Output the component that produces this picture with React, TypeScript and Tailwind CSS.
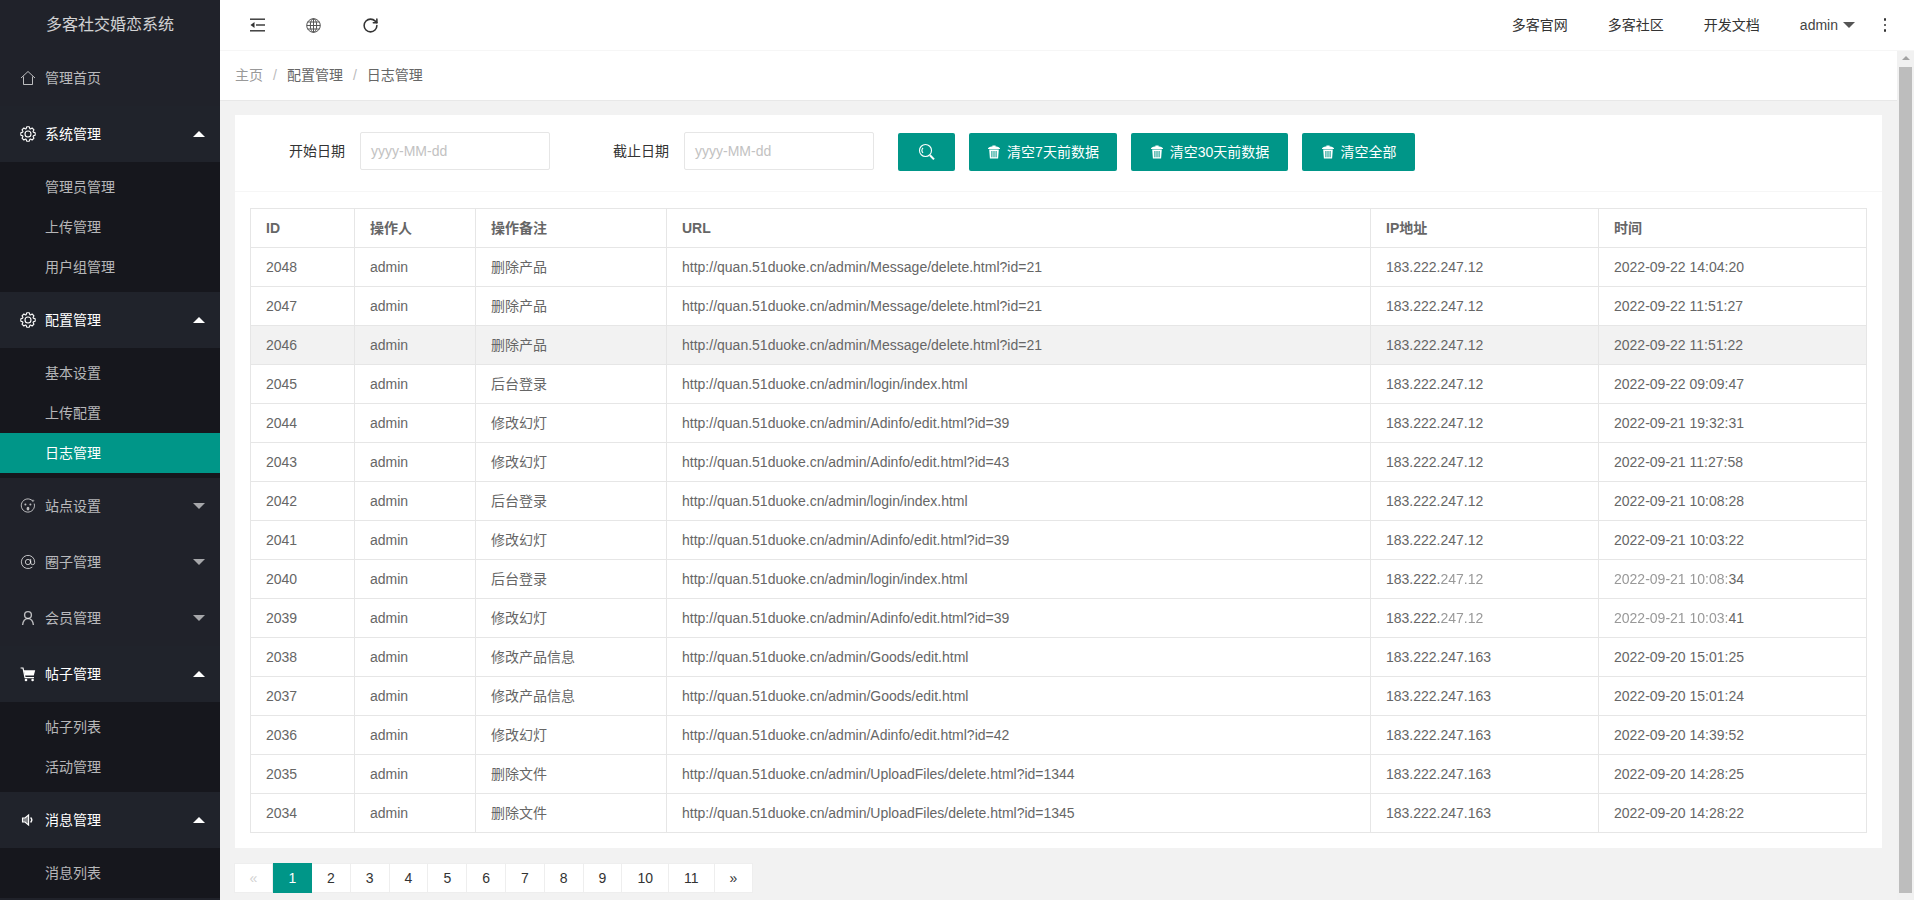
import React from 'react';
import { AtSign, RotateCw } from 'lucide-react';

const FONT = { fontFamily: '"Liberation Sans", "Noto Sans CJK SC", sans-serif' };

// 8 tooth outline for the settings icon
const GEAR_POINTS = Array.from({ length: 8 })
  .flatMap((_, i) => {
    const a = (i * Math.PI) / 4;
    return [
      [5.6, a - 0.34],
      [7.3, a - 0.18],
      [7.3, a + 0.18],
      [5.6, a + 0.34],
    ];
  })
  .map(([r, a]) => `${(8 + r * Math.cos(a)).toFixed(2)},${(8 + r * Math.sin(a)).toFixed(2)}`)
  .join(' ');

const IconHome = () => (
  <svg width="16" height="16" viewBox="0 0 16 16" fill="none" stroke="currentColor" strokeWidth="1">
    <path d="M1 8 L8 1.5 L15 8" />
    <path d="M3.5 6.5 V14.5 H12.5 V6.5" />
  </svg>
);

const IconGear = () => (
  <svg width="16" height="16" viewBox="0 0 16 16" fill="none" stroke="currentColor" strokeWidth="1.1" strokeLinejoin="round">
    <polygon points={GEAR_POINTS} />
    <circle cx="8" cy="8" r="3" />
  </svg>
);

const IconFace = () => (
  <svg width="16" height="16" viewBox="0 0 16 16" fill="none" stroke="currentColor" strokeWidth="1">
    <path d="M12.6 2.9 A6.6 6.6 0 1 0 14.2 5.6" />
    <path d="M13 1 l.4 1.4 1.4.4-1.4.4-.4 1.4-.4-1.4-1.4-.4 1.4-.4 z" fill="currentColor" stroke="none" />
    <circle cx="5.4" cy="6.6" r="1" fill="currentColor" stroke="none" />
    <circle cx="10.4" cy="6.6" r="1" fill="currentColor" stroke="none" />
    <ellipse cx="8" cy="10.6" rx="1.4" ry="1.9" fill="currentColor" stroke="none" />
  </svg>
);

const IconUser = () => (
  <svg width="16" height="16" viewBox="0 0 16 16" fill="none" stroke="currentColor" strokeWidth="1.4">
    <circle cx="8" cy="5" r="3.4" />
    <path d="M2.6 15 C3 11 5 8.6 8 8.6 S13 11 13.4 15" />
  </svg>
);

const IconCart = () => (
  <svg width="16" height="16" viewBox="0 0 16 16" fill="none" stroke="currentColor" strokeWidth="1.2">
    <path d="M0.6 2 H3 L5 11.6 H14" />
    <path d="M3.8 4.2 H15.2 L13.8 9.4 H4.8 z" fill="currentColor" stroke="none" />
    <circle cx="6" cy="14" r="1.3" fill="currentColor" stroke="none" />
    <circle cx="12.6" cy="14" r="1.3" fill="currentColor" stroke="none" />
  </svg>
);

const IconSpeaker = () => (
  <svg width="16" height="16" viewBox="0 0 16 16" fill="none" stroke="currentColor" strokeWidth="1.1">
    <path d="M2.5 6 H5 L8.6 3 V13 L5 10 H2.5 z" fill="currentColor" fillOpacity="0.45" />
    <path d="M10.6 5.6 A3.4 3.4 0 0 1 10.6 10.4" strokeWidth="1.4" />
  </svg>
);

const IconShrink = () => (
  <svg width="16" height="14" viewBox="0 0 16 14" fill="#333">
    <rect x="0" y="0.5" width="15" height="1.4" />
    <rect x="6" y="6.3" width="9" height="1.4" />
    <rect x="0" y="12.1" width="15" height="1.4" />
    <path d="M4.5 4 V10 L0.5 7 z" />
  </svg>
);

const IconGlobe = () => (
  <svg width="15" height="15" viewBox="0 0 15 15" fill="none" stroke="#555" strokeWidth="1">
    <circle cx="7.5" cy="7.5" r="6.8" />
    <ellipse cx="7.5" cy="7.5" rx="3.2" ry="6.8" />
    <path d="M7.5 .7 V14.3 M.7 7.5 H14.3 M1.6 4 H13.4 M1.6 11 H13.4" />
  </svg>
);

const IconSearch = () => (
  <svg width="18" height="18" viewBox="0 0 18 18" fill="none" stroke="#fff" strokeWidth="1.1">
    <circle cx="7.5" cy="7.5" r="6" />
    <path d="M5 4.8 A4 4 0 0 0 5 10" />
    <path d="M12 12.2 L16 16.4" strokeWidth="2" />
  </svg>
);

const IconTrash = () => (
  <svg width="14" height="14" viewBox="0 0 14 14" fill="#fff">
    <path d="M1 3.2 C2.5 1.6 4.6 1.6 5.4 1.6 V0.6 H8.6 V1.6 C9.4 1.6 11.5 1.6 13 3.2 V3.9 H1 z" />
    <path d="M2.2 4.6 H11.8 L11.1 13.6 H2.9 z M4.4 6 V12.2 H5.4 V6 z M6.5 6 V12.2 H7.5 V6 z M8.6 6 V12.2 H9.6 V6 z" fillRule="evenodd" />
  </svg>
);

const Caret = ({ up }: { up?: boolean }) => {
  if (up) {
    return <span className="absolute right-[15px] top-1/2 -mt-[3px] h-0 w-0 border-x-[6px] border-b-[6px] border-x-transparent border-b-white" />;
  }
  return <span className="absolute right-[15px] top-1/2 -mt-[3px] h-0 w-0 border-x-[6px] border-t-[6px] border-x-transparent border-t-[#a6a7aa]" />;
};

interface MenuGroup {
  label: string;
  icon: React.ReactNode;
  open?: boolean;
  hasCaret?: boolean;
  children?: { label: string; active?: boolean }[];
}

const MENU: MenuGroup[] = [
  { label: '管理首页', icon: <IconHome /> },
  {
    label: '系统管理',
    icon: <IconGear />,
    open: true,
    hasCaret: true,
    children: [{ label: '管理员管理' }, { label: '上传管理' }, { label: '用户组管理' }],
  },
  {
    label: '配置管理',
    icon: <IconGear />,
    open: true,
    hasCaret: true,
    children: [{ label: '基本设置' }, { label: '上传配置' }, { label: '日志管理', active: true }],
  },
  { label: '站点设置', icon: <IconFace />, hasCaret: true },
  { label: '圈子管理', icon: <AtSign size={16} strokeWidth={1.5} />, hasCaret: true },
  { label: '会员管理', icon: <IconUser />, hasCaret: true },
  {
    label: '帖子管理',
    icon: <IconCart />,
    open: true,
    hasCaret: true,
    children: [{ label: '帖子列表' }, { label: '活动管理' }],
  },
  {
    label: '消息管理',
    icon: <IconSpeaker />,
    open: true,
    hasCaret: true,
    children: [{ label: '消息列表' }],
  },
];

const ROWS = [
  ['2048', 'admin', '删除产品', 'http://quan.51duoke.cn/admin/Message/delete.html?id=21', '183.222.247.12', '2022-09-22 14:04:20'],
  ['2047', 'admin', '删除产品', 'http://quan.51duoke.cn/admin/Message/delete.html?id=21', '183.222.247.12', '2022-09-22 11:51:27'],
  ['2046', 'admin', '删除产品', 'http://quan.51duoke.cn/admin/Message/delete.html?id=21', '183.222.247.12', '2022-09-22 11:51:22'],
  ['2045', 'admin', '后台登录', 'http://quan.51duoke.cn/admin/login/index.html', '183.222.247.12', '2022-09-22 09:09:47'],
  ['2044', 'admin', '修改幻灯', 'http://quan.51duoke.cn/admin/Adinfo/edit.html?id=39', '183.222.247.12', '2022-09-21 19:32:31'],
  ['2043', 'admin', '修改幻灯', 'http://quan.51duoke.cn/admin/Adinfo/edit.html?id=43', '183.222.247.12', '2022-09-21 11:27:58'],
  ['2042', 'admin', '后台登录', 'http://quan.51duoke.cn/admin/login/index.html', '183.222.247.12', '2022-09-21 10:08:28'],
  ['2041', 'admin', '修改幻灯', 'http://quan.51duoke.cn/admin/Adinfo/edit.html?id=39', '183.222.247.12', '2022-09-21 10:03:22'],
  ['2040', 'admin', '后台登录', 'http://quan.51duoke.cn/admin/login/index.html', '183.222.247.12', '2022-09-21 10:08:34'],
  ['2039', 'admin', '修改幻灯', 'http://quan.51duoke.cn/admin/Adinfo/edit.html?id=39', '183.222.247.12', '2022-09-21 10:03:41'],
  ['2038', 'admin', '修改产品信息', 'http://quan.51duoke.cn/admin/Goods/edit.html', '183.222.247.163', '2022-09-20 15:01:25'],
  ['2037', 'admin', '修改产品信息', 'http://quan.51duoke.cn/admin/Goods/edit.html', '183.222.247.163', '2022-09-20 15:01:24'],
  ['2036', 'admin', '修改幻灯', 'http://quan.51duoke.cn/admin/Adinfo/edit.html?id=42', '183.222.247.163', '2022-09-20 14:39:52'],
  ['2035', 'admin', '删除文件', 'http://quan.51duoke.cn/admin/UploadFiles/delete.html?id=1344', '183.222.247.163', '2022-09-20 14:28:25'],
  ['2034', 'admin', '删除文件', 'http://quan.51duoke.cn/admin/UploadFiles/delete.html?id=1345', '183.222.247.163', '2022-09-20 14:28:22'],
];

const HEADERS = ['ID', '操作人', '操作备注', 'URL', 'IP地址', '时间'];
const PAGES = ['2', '3', '4', '5', '6', '7', '8', '9', '10', '11', '»'];

const Sidebar = () => (
  <aside className="flex h-full w-[220px] shrink-0 flex-col overflow-hidden bg-[#20222a]">
    <div className="flex h-[50px] shrink-0 items-center justify-center text-base text-white/80">多客社交婚恋系统</div>
    {MENU.map((group) => (
      <div key={group.label} className="shrink-0">
        <div
          className={`relative flex h-[56px] items-center pl-[20px] text-sm ${
            group.open ? 'bg-[#20232b] text-white' : 'text-white/70'
          }`}
        >
          <span className="flex w-[25px] items-center">{group.icon}</span>
          <span>{group.label}</span>
          {group.hasCaret && <Caret up={group.open} />}
        </div>
        {group.children && (
          <div className="bg-[#16171d] py-[5px]">
            {group.children.map((child) => (
              <div
                key={child.label}
                className={`flex h-[40px] items-center pl-[45px] text-sm ${
                  child.active ? 'bg-[#009688] text-white' : 'text-white/70'
                }`}
              >
                {child.label}
              </div>
            ))}
          </div>
        )}
      </div>
    ))}
  </aside>
);

const TopBar = () => (
  <header className="flex h-[51px] shrink-0 items-center border-b border-[#f6f6f6] bg-white pl-[30px] pr-[25px] text-sm text-[#333]">
    <IconShrink />
    <span className="ml-[40px]">
      <IconGlobe />
    </span>
    <span className="ml-[41px]">
      <RotateCw size={17} strokeWidth={2.2} color="#333" />
    </span>
    <div className="ml-auto flex items-center">
      <span>多客官网</span>
      <span className="ml-[40px]">多客社区</span>
      <span className="ml-[40px]">开发文档</span>
      <span className="ml-[40px] text-[#444]">admin</span>
      <span className="ml-[5px] h-0 w-0 border-x-[6px] border-t-[6px] border-x-transparent border-t-[#555]" />
      <span className="ml-[26px] flex w-[8px] flex-col items-center gap-[3px]">
        <span className="h-[2.5px] w-[2.5px] rounded-full bg-[#333]" />
        <span className="h-[2.5px] w-[2.5px] rounded-full bg-[#333]" />
        <span className="h-[2.5px] w-[2.5px] rounded-full bg-[#333]" />
      </span>
    </div>
  </header>
);

const ActionButton = ({ label, className }: { label: string; className: string }) => (
  <button className={`flex h-[38px] items-center justify-center gap-[6px] rounded-[2px] bg-[#009688] text-sm text-white ${className}`}>
    <IconTrash />
    {label}
  </button>
);

const DateField = ({ label, inputWidth, labelWidth }: { label: string; inputWidth: string; labelWidth: string }) => (
  <div className="flex items-center">
    <label className={`pr-[15px] text-right text-sm text-[#333] ${labelWidth}`}>{label}</label>
    <div className={`flex h-[38px] items-center rounded-[2px] border border-[#e6e6e6] pl-[10px] text-sm text-[#c2c2c2] ${inputWidth}`}>yyyy-MM-dd</div>
  </div>
);

const FilterBar = () => (
  <div className="flex h-[77px] items-start border-b border-[#f6f6f6] pt-[17px]">
    <DateField label="开始日期" labelWidth="w-[125px]" inputWidth="w-[190px]" />
    <DateField label="截止日期" labelWidth="w-[134px]" inputWidth="w-[190px]" />
    <div className="ml-[24px] mt-px flex gap-[14px]">
      <button className="flex h-[38px] w-[57px] items-center justify-center rounded-[2px] bg-[#009688] text-white">
        <IconSearch />
      </button>
      <ActionButton label="清空7天前数据" className="w-[148px]" />
      <ActionButton label="清空30天前数据" className="w-[157px]" />
      <ActionButton label="清空全部" className="w-[113px]" />
    </div>
  </div>
);

const IpCell = ({ value, blurred }: { value: string; blurred: boolean }) =>
  blurred ? (
    <>
      183.222.<span className="text-[#999] blur-[0.6px]">{value.slice(8)}</span>
    </>
  ) : (
    <>{value}</>
  );

const TimeCell = ({ value, blurred }: { value: string; blurred: boolean }) =>
  blurred ? (
    <>
      <span className="text-[#999] blur-[0.6px]">{value.slice(0, 17)}</span>
      {value.slice(17)}
    </>
  ) : (
    <>{value}</>
  );

const LogTable = () => (
  <table className="w-[1616px] table-fixed border-collapse text-sm text-[#666]">
    <colgroup>
      <col className="w-[104px]" />
      <col className="w-[121px]" />
      <col className="w-[191px]" />
      <col className="w-[704px]" />
      <col className="w-[228px]" />
      <col className="w-[268px]" />
    </colgroup>
    <thead>
      <tr className="h-[39px]">
        {HEADERS.map((h) => (
          <th key={h} className="border border-[#e6e6e6] px-[15px] text-left font-bold">
            {h}
          </th>
        ))}
      </tr>
    </thead>
    <tbody>
      {ROWS.map((row) => {
        const blurred = row[0] === '2040' || row[0] === '2039';
        return (
          <tr key={row[0]} className={`h-[39px] ${row[0] === '2046' ? 'bg-[#f2f2f2]' : ''}`}>
            <td className="border border-[#e6e6e6] px-[15px]">{row[0]}</td>
            <td className="border border-[#e6e6e6] px-[15px]">{row[1]}</td>
            <td className="border border-[#e6e6e6] px-[15px]">{row[2]}</td>
            <td className="border border-[#e6e6e6] px-[15px]">{row[3]}</td>
            <td className="border border-[#e6e6e6] px-[15px]">
              <IpCell value={row[4]} blurred={blurred} />
            </td>
            <td className="border border-[#e6e6e6] px-[15px]">
              <TimeCell value={row[5]} blurred={blurred} />
            </td>
          </tr>
        );
      })}
    </tbody>
  </table>
);

const Pagination = () => (
  <div className="-ml-px mt-[15px] flex h-[30px] text-sm text-[#333]">
    <span className="flex w-[39px] items-center justify-center border border-[#eee] bg-white text-[#d2d2d2]">«</span>
    <span className="flex w-[39px] items-center justify-center bg-[#009688] text-white">1</span>
    {PAGES.map((p) => (
      <span key={p} className="flex items-center justify-center border border-l-0 border-[#eee] bg-white px-[15px]">
        {p}
      </span>
    ))}
  </div>
);

const ScrollRail = () => (
  <div className="flex w-[17px] shrink-0 flex-col items-center bg-[#f1f1f1]">
    <span className="mt-[5px] h-0 w-0 border-x-[4px] border-b-[4px] border-x-transparent border-b-[#a3a3a3]" />
    <div className="mt-[7px] h-[826px] w-[13px] bg-[#bdbdbd]" />
  </div>
);

export default function App() {
  return (
    <div className="flex h-[900px] w-[1914px] overflow-hidden bg-white" style={FONT}>
      <Sidebar />
      <div className="flex min-w-0 flex-1 flex-col">
        <TopBar />
        <div className="flex min-h-0 flex-1">
          <main className="flex min-w-0 flex-1 flex-col bg-[#f2f2f2]">
            <nav className="flex h-[50px] shrink-0 items-center border-b border-[#e8e8e8] bg-white pb-[2px] pl-[15px] text-sm text-[#666]">
              <span className="text-[#999]">主页</span>
              <span className="mx-[10px] text-[#bbb]">/</span>
              <span>配置管理</span>
              <span className="mx-[10px] text-[#bbb]">/</span>
              <span>日志管理</span>
            </nav>
            <div className="flex flex-1 flex-col px-[15px] pt-[14px]">
              <section className="h-[733px] shrink-0 bg-white">
                <FilterBar />
                <div className="px-[15px] pt-[16px]">
                  <LogTable />
                </div>
              </section>
              <Pagination />
            </div>
          </main>
          <ScrollRail />
        </div>
      </div>
    </div>
  );
}
